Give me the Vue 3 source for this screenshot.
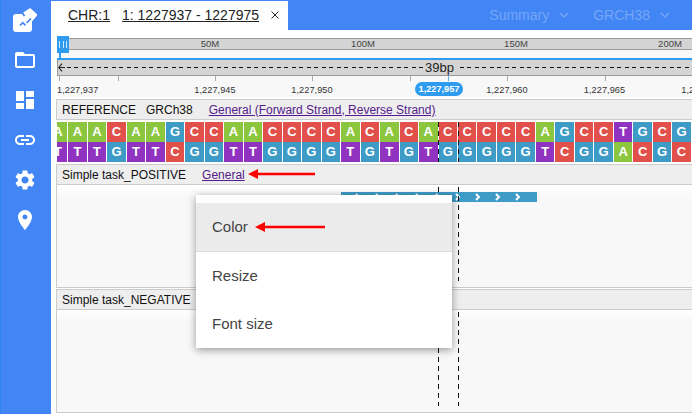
<script setup>
const top = 'AAACAAGCCAACCCCACACACCCCCAGCCTGCG'.split('')
const comp = { A: 'T', T: 'A', C: 'G', G: 'C' }
const bottom = top.map((b) => comp[b])
const overviewLabels = [
  { t: '50M', x: 153 },
  { t: '100M', x: 306 },
  { t: '150M', x: 459 },
  { t: '200M', x: 613 }
]
const ticks = [2, 60.5, 158, 255, 352.5, 450, 547.5, 645]
const labels = [
  { t: '1,227,945', x: 158 },
  { t: '1,227,950', x: 255 },
  { t: '1,227,960', x: 450 },
  { t: '1,227,965', x: 547.5 },
  { t: '1,227,970', x: 645 }
]
const chevrons = [0, 1, 2, 3, 4, 5, 6, 7, 8]
</script>

<template>
  <div class="app">
    <aside class="side">
      <div class="slot">
        <svg width="24" height="24" viewBox="0 0 24 24">
          <rect x="0" y="6" width="19" height="18" rx="3" fill="#fff" />
          <path d="M10 6L17 1.500 23 7 17 14z" fill="#fff" stroke="#fff" stroke-width="2.400" stroke-linejoin="round" />
          <path d="M8.500 3.500l3 4.500M7 17.500l2.800-2.800 2.700 2.700M13.500 15l4.500-4.500" fill="none" stroke="#4285f4" stroke-width="1.700" />
        </svg>
      </div>
      <div class="slot">
        <svg width="24" height="24" viewBox="0 0 24 24" fill="#fff"><path d="M20 6h-8l-2-2H4c-1.100 0-1.990.9-1.990 2L2 18c0 1.100.9 2 2 2h16c1.100 0 2-.9 2-2V8c0-1.100-.9-2-2-2zm0 12H4V8h16v10z" /></svg>
      </div>
      <div class="slot">
        <svg width="24" height="24" viewBox="0 0 24 24" fill="#fff"><path d="M3 13h8V3H3v10zm0 8h8v-6H3v6zm10 0h8V11h-8v10zm0-18v6h8V3h-8z" /></svg>
      </div>
      <div class="slot">
        <svg width="24" height="24" viewBox="0 0 24 24" fill="#fff"><path d="M3.900 12c0-1.710 1.390-3.100 3.100-3.100h4V7H7c-2.760 0-5 2.240-5 5s2.240 5 5 5h4v-1.900H7c-1.710 0-3.100-1.390-3.100-3.100zM8 13h8v-2H8v2zm9-6h-4v1.900h4c1.710 0 3.100 1.390 3.100 3.100s-1.390 3.100-3.100 3.100h-4V17h4c2.760 0 5-2.240 5-5s-2.240-5-5-5z" /></svg>
      </div>
      <div class="slot">
        <svg width="24" height="24" viewBox="0 0 24 24" fill="#fff"><path d="M19.140 12.940c.04-.3.060-.61.060-.94 0-.32-.02-.64-.07-.94l2.030-1.580a.49.49 0 0 0 .12-.61l-1.920-3.320a.488.488 0 0 0-.59-.22l-2.390.96c-.5-.38-1.030-.7-1.620-.94l-.36-2.540a.484.484 0 0 0-.48-.41h-3.840c-.24 0-.43.17-.47.41l-.36 2.540c-.59.24-1.130.57-1.620.94l-2.390-.96c-.22-.08-.47 0-.59.22L2.740 8.870c-.12.21-.08.47.12.61l2.030 1.580c-.05.3-.09.63-.09.94s.02.64.07.94l-2.030 1.580a.49.49 0 0 0-.12.61l1.920 3.320c.12.22.37.29.59.22l2.390-.96c.5.38 1.030.7 1.620.94l.36 2.540c.05.24.24.41.48.41h3.840c.24 0 .44-.17.47-.41l.36-2.540c.59-.24 1.130-.56 1.620-.94l2.390.96c.22.08.47 0 .59-.22l1.920-3.320c.12-.22.07-.47-.12-.61l-2.010-1.580zM12 15.600c-1.980 0-3.600-1.620-3.600-3.600s1.620-3.600 3.600-3.600 3.600 1.620 3.600 3.600-1.620 3.600-3.600 3.600z" /></svg>
      </div>
      <div class="slot">
        <svg width="24" height="24" viewBox="0 0 24 24" fill="#fff"><path d="M12 2C8.130 2 5 5.130 5 9c0 5.250 7 13 7 13s7-7.750 7-13c0-3.870-3.130-7-7-7zm0 9.500a2.500 2.500 0 0 1 0-5 2.500 2.500 0 0 1 0 5z" /></svg>
      </div>
    </aside>

    <main class="main">
      <header class="topbar">
        <div class="tab">
          <span class="chr">CHR:1</span>
          <span class="range">1: 1227937 - 1227975</span>
          <svg class="close" width="8" height="8" viewBox="0 0 8 8"><path d="M.5.500l7 7M7.500.500l-7 7" stroke="#222" stroke-width="1" /></svg>
        </div>
        <div class="menus">
          <span class="menu-name">Summary</span>
          <svg class="caret" width="10" height="6" viewBox="0 0 10 6"><path d="M1 1l4 4 4-4" fill="none" stroke="#76a5f7" stroke-width="1.400" /></svg>
          <span class="menu-name second">GRCH38</span>
          <svg class="caret" width="10" height="6" viewBox="0 0 10 6"><path d="M1 1l4 4 4-4" fill="none" stroke="#76a5f7" stroke-width="1.400" /></svg>
        </div>
      </header>

      <div class="content">
        <section class="overview">
          <div class="chrom">
            <span v-for="l in overviewLabels" :key="l.t" class="chrom-label" :style="{ left: l.x + 'px' }">{{ l.t }}</span>
          </div>
          <div class="spacer"></div>
          <div class="blue-line"></div>
          <div class="nav">
            <svg class="nav-arrow" width="7" height="9" viewBox="0 0 7 9"><path d="M4 .7L.8 4.500 4 8.300M.8 4.500H7" fill="none" stroke="#222" stroke-width="1.100" /></svg>
            <div class="dash-h first"></div>
            <span class="bp">39bp</span>
            <div class="dash-h"></div>
          </div>
          <div class="handle"><i></i><i></i><i></i></div>
          <div class="stem"></div>
        </section>

        <section class="ruler">
          <i v-for="t in ticks" :key="t" class="tick" :style="{ left: t + 'px' }"></i>
          <i class="tick cursor"></i>
          <span class="pos first-pos">1,227,937</span>
          <span v-for="l in labels" :key="l.t" class="pos" :style="{ left: l.x + 'px' }">{{ l.t }}</span>
          <span class="pill">1,227,957</span>
        </section>

        <div class="head ref-head">
          <span>REFERENCE</span>
          <span class="build">GRCh38</span>
          <a class="link ref-link">General (Forward Strand, Reverse Strand)</a>
        </div>

        <section class="seq">
          <div class="rows">
            <div class="row">
              <span v-for="(b, i) in top" :key="i" class="cell" :class="'b' + b">{{ b }}</span>
            </div>
            <div class="row">
              <span v-for="(b, i) in bottom" :key="i" class="cell" :class="'b' + b">{{ b }}</span>
            </div>
          </div>
          <i class="vdash one"></i>
          <i class="vdash two"></i>
        </section>

        <div class="head track-head">
          <span>Simple task_POSITIVE</span>
          <a class="link gen-link">General</a>
        </div>
        <section class="body">
          <div class="feature">
            <svg v-for="c in chevrons" :key="c" class="chev" :style="{ left: 14 + c * 20 + 'px' }" width="6" height="8" viewBox="0 0 6 8"><path d="M1 1l3 3-3 3" fill="none" stroke="#fff" stroke-width="2" /></svg>
          </div>
          <i class="vdash one"></i>
          <i class="vdash two"></i>
        </section>

        <div class="gap"></div>

        <div class="head track-head">
          <span>Simple task_NEGATIVE</span>
        </div>
        <section class="body">
          <i class="vdash one"></i>
          <i class="vdash two"></i>
        </section>
      </div>
    </main>

    <div class="popup">
      <div class="item active">Color</div>
      <div class="item">Resize</div>
      <div class="item">Font size</div>
    </div>

    <svg class="red-arrow a1" width="68" height="12" viewBox="0 0 68 12"><path d="M0 6l10-5v3.800h57v2.400H10V11z" fill="#f00" /></svg>
    <svg class="red-arrow a2" width="71" height="12" viewBox="0 0 71 12"><path d="M0 6l10-5v3.800h60v2.400H10V11z" fill="#f00" /></svg>
  </div>
</template>

<style>
html, body { margin: 0; background: #fff; }
</style>

<style scoped>
.app { position: relative; display: flex; width: 692px; height: 414px; overflow: hidden; font-family: "Liberation Sans", Arial, sans-serif; color: #111; background: #fff; }
.side { width: 50px; flex: none; background: #4285f4; border-left: 1px solid #2f86ea; display: flex; flex-direction: column; }
.slot { height: 40px; display: flex; align-items: center; justify-content: center; margin-right: 2px; }
.main { flex: 1; min-width: 0; display: flex; flex-direction: column; }
.topbar { height: 30px; flex: none; background: #4285f4; display: flex; align-items: flex-end; justify-content: space-between; }
.tab { width: 237px; height: 29px; background: #fff; display: flex; align-items: center; font-size: 14px; color: #222; box-sizing: border-box; padding: 0 0 2px 17px; }
.chr, .range { text-decoration: underline; }
.range { margin-left: 12px; }
.close { margin-left: 12px; margin-top: 1px; }
.menus { height: 30px; display: flex; align-items: center; padding-right: 22px; font-size: 14px; color: #76a5f7; }
.menu-name { margin-bottom: 1px; }
.caret { margin-left: 10px; }
.second { margin-left: 24px; }
.content { flex: 1; min-height: 0; padding-left: 5px; }
.overview { position: relative; margin: 8px 0 0 1px; }
.chrom { position: relative; height: 10px; background: #d4d4d4; border-top: 1px solid #999; border-bottom: 1px solid #999; }
.chrom-label { position: absolute; top: 0; transform: translateX(-50%); font-size: 9.500px; line-height: 10px; color: #444; }
.spacer { height: 8px; background: #f8f8f8; }
.blue-line { height: 2px; background: #2f9bee; }
.nav { height: 15px; background: #d4d4d4; border-bottom: 1px solid #999; border-left: 1px solid #999; display: flex; align-items: center; position: relative; }
.nav-arrow { flex: none; }
.dash-h { height: 1px; flex: 1; background: repeating-linear-gradient(90deg, #111 0 4px, transparent 4px 7.500px); }
.dash-h.first { flex: none; width: 356px; margin-left: 2px; }
.bp { font-size: 13px; color: #222; margin: 0 7px 0 2px; width: 28px; white-space: nowrap; }
.handle { position: absolute; left: 0; top: -2px; width: 12px; height: 17px; background: #2f9bee; display: flex; align-items: center; justify-content: center; gap: 2.700px; }
.handle i { width: 1px; height: 7px; background: #cfe8fb; }
.stem { position: absolute; left: 2px; top: 15px; width: 2px; height: 5px; background: #2f9bee; }
.ruler { position: relative; height: 21px; margin-left: 1px; background: #f8f8f8; }
.tick { position: absolute; top: 0; width: 1px; height: 5px; background: #aaa; }
.tick.cursor { left: 391px; background: #5aaef0; }
.pos { position: absolute; top: 8px; font-size: 9.200px; line-height: 12px; transform: translateX(-50%); color: #333; white-space: nowrap; letter-spacing: .05px; }
.first-pos { left: 0; transform: none; }
.pill { position: absolute; left: 358px; top: 6px; width: 48px; height: 14px; border-radius: 7px; background: #2f9bee; color: #fff; font-size: 9.200px; font-weight: 700; line-height: 14px; text-align: center; }
.head { box-sizing: border-box; height: 21px; display: flex; align-items: center; padding-left: 5px; font-size: 12px; background: #eee; border: 1px solid #ccc; border-width: 1px 0 1px 1px; color: #111; }
.ref-head { margin-top: 2px; }
.build { margin-left: 10px; }
.link { color: #551a8b; text-decoration: underline; }
.ref-link { margin-left: 16px; }
.gen-link { margin-left: 16px; }
.seq { position: relative; margin-left: 1px; height: 44px; padding-top: 2px; box-sizing: border-box; overflow: hidden; background: #fff; }
.rows { margin-left: -8.200px; width: 660px; }
.row { display: flex; height: 20px; }
.cell { flex: none; box-sizing: border-box; width: 19.490px; height: 20px; border-right: 1px solid #fff; color: #fff; font-size: 13px; font-weight: 700; line-height: 20px; text-align: center; }
.bA { background: #8cc63f; }
.bC { background: #e2504c; }
.bG { background: #3d9bc6; }
.bT { background: #9033c0; }
.body { position: relative; box-sizing: border-box; height: 103px; background: linear-gradient(#fff 0, #f8f8f8 12px); border-left: 1px solid #ccc; border-bottom: 1px solid #ccc; }
.gap { height: 1px; }
.track-head { height: 21px; }
.vdash { position: absolute; top: 2px; bottom: 6px; width: 1px; background: repeating-linear-gradient(180deg, #111 0 5px, transparent 5px 9px); }
.seq .vdash { bottom: 2px; }
.vdash.one { left: 381px; }
.vdash.two { left: 401px; }
.feature { position: absolute; left: 284px; top: 7px; width: 196px; height: 10px; background: #3d9bc6; }
.chev { position: absolute; top: 1px; }
.popup { position: absolute; left: 196px; top: 195px; width: 256px; height: 153px; box-sizing: border-box; padding-top: 8px; background: #fff; box-shadow: 0 2px 8px rgba(0, 0, 0, .4); font-size: 15px; color: #444; z-index: 5; }
.item { height: 48px; line-height: 48px; padding-left: 16px; }
.item.active { background: #ebebeb; border-bottom: 1px solid #ddd; }
.red-arrow { position: absolute; z-index: 6; }
.a1 { left: 248px; top: 168px; }
.a2 { left: 255px; top: 221px; }
</style>
